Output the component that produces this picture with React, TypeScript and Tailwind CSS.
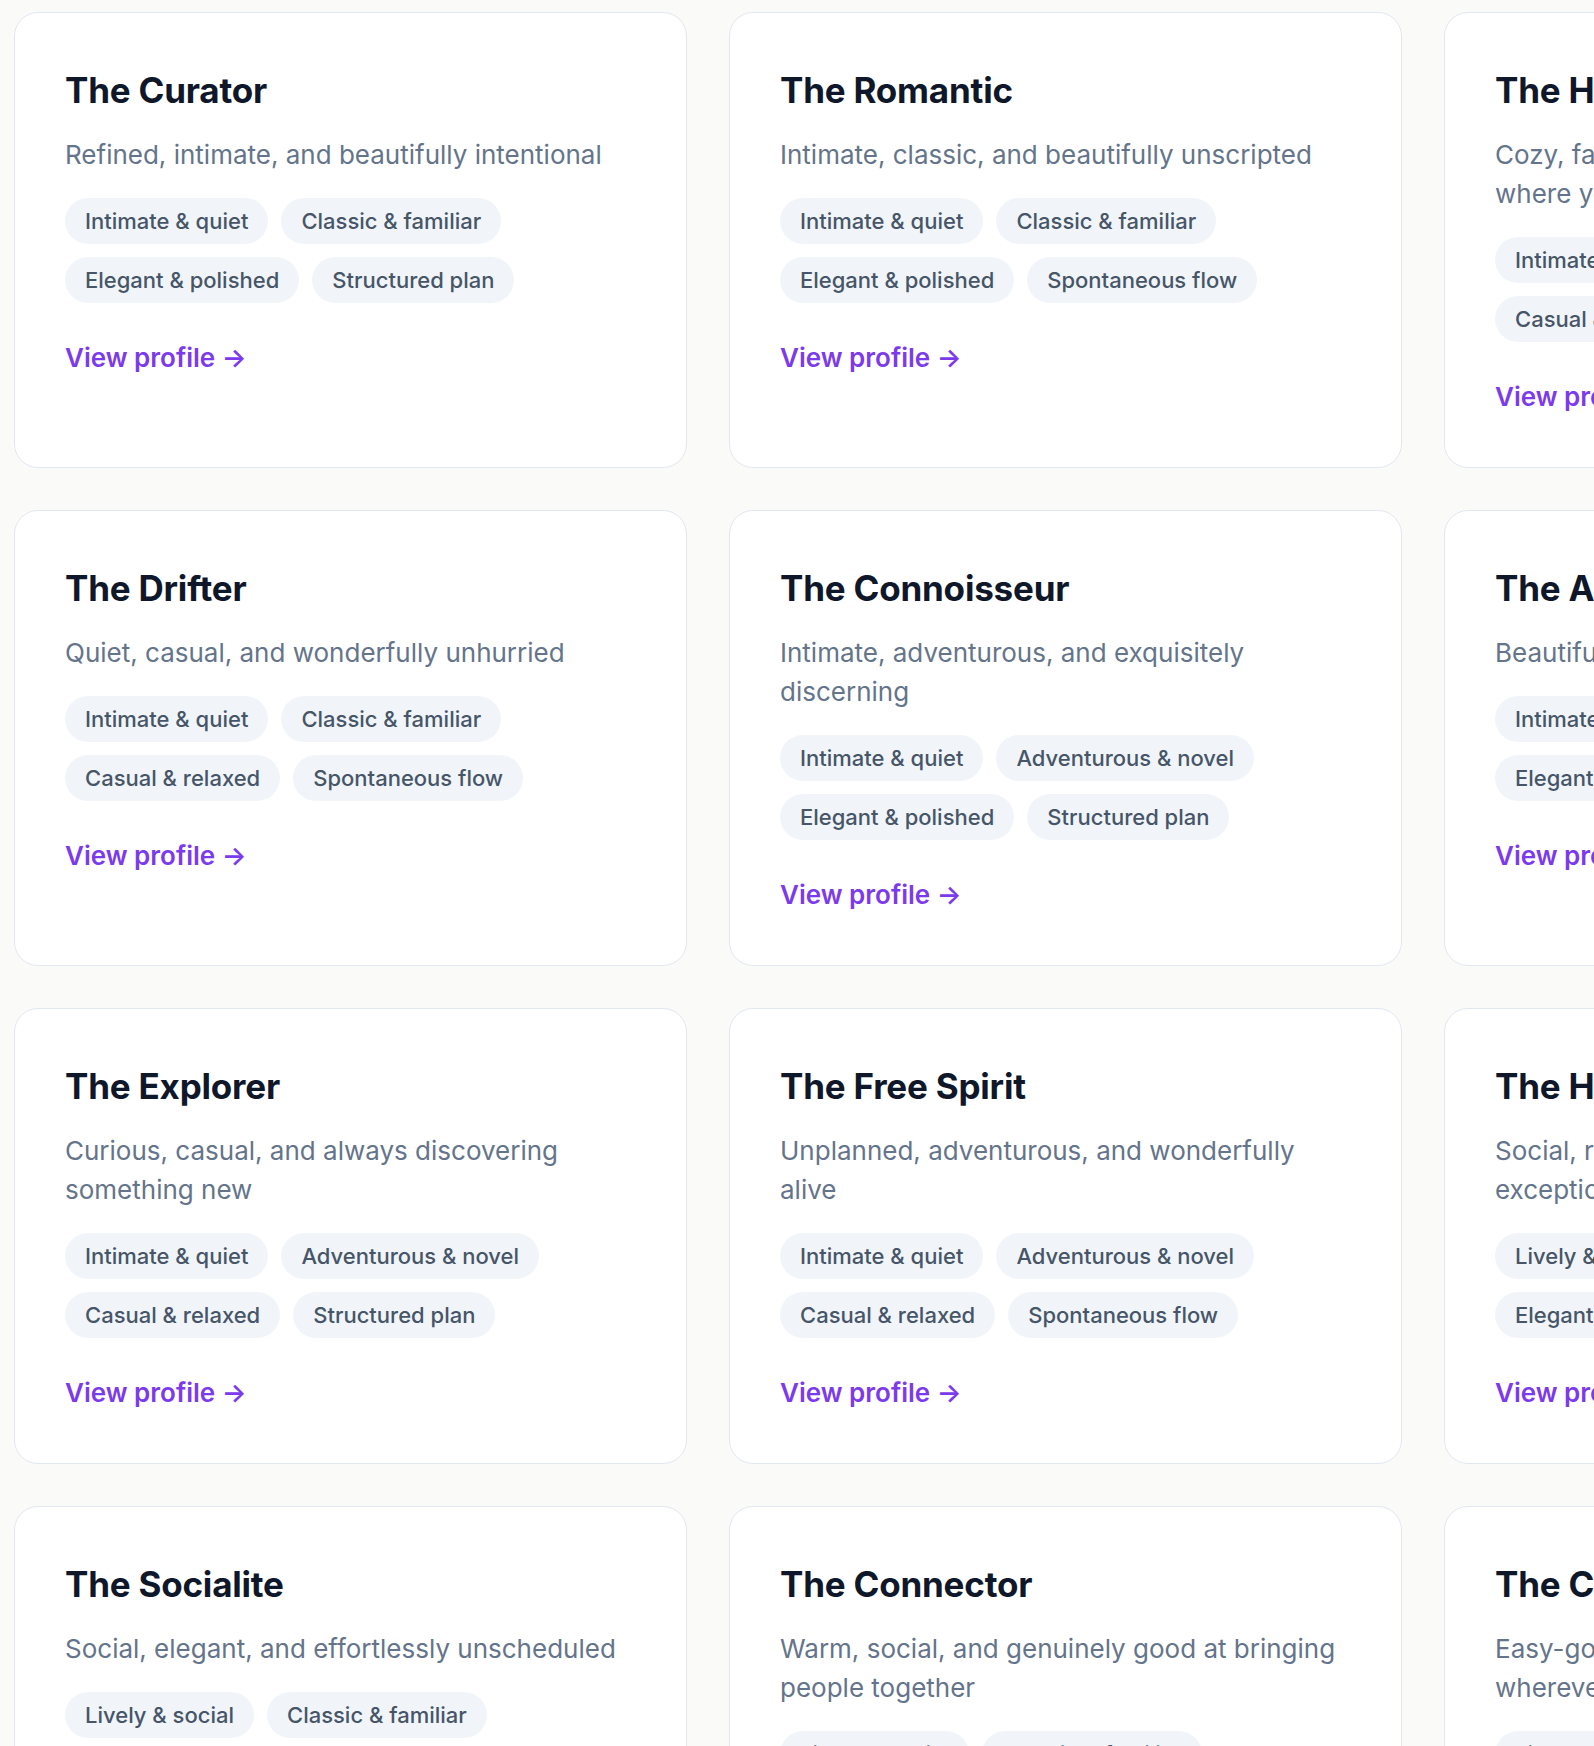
// types
interface Profile {
  name: string;
  tagline: string;
  tags: string[];
}

const profiles: Profile[] = [
  {
    name: "The Curator",
    tagline: "Refined, intimate, and beautifully intentional",
    tags: ["Intimate & quiet", "Classic & familiar", "Elegant & polished", "Structured plan"],
  },
  {
    name: "The Romantic",
    tagline: "Intimate, classic, and beautifully unscripted",
    tags: ["Intimate & quiet", "Classic & familiar", "Elegant & polished", "Spontaneous flow"],
  },
  {
    name: "The Homebody",
    tagline: "Cozy, familiar, and happiest at the local spot where you're a regular",
    tags: ["Intimate & quiet", "Classic & familiar", "Casual & relaxed", "Structured plan"],
  },
  {
    name: "The Drifter",
    tagline: "Quiet, casual, and wonderfully unhurried",
    tags: ["Intimate & quiet", "Classic & familiar", "Casual & relaxed", "Spontaneous flow"],
  },
  {
    name: "The Connoisseur",
    tagline: "Intimate, adventurous, and exquisitely discerning",
    tags: ["Intimate & quiet", "Adventurous & novel", "Elegant & polished", "Structured plan"],
  },
  {
    name: "The Aesthete",
    tagline: "Beautifully intimate, polished, and refined",
    tags: ["Intimate & quiet", "Classic & familiar", "Elegant & polished", "Spontaneous flow"],
  },
  {
    name: "The Explorer",
    tagline: "Curious, casual, and always discovering something new",
    tags: ["Intimate & quiet", "Adventurous & novel", "Casual & relaxed", "Structured plan"],
  },
  {
    name: "The Free Spirit",
    tagline: "Unplanned, adventurous, and wonderfully alive",
    tags: ["Intimate & quiet", "Adventurous & novel", "Casual & relaxed", "Spontaneous flow"],
  },
  {
    name: "The Host",
    tagline: "Social, refined, and warmly gracious with an exceptional eye for detail",
    tags: ["Lively & social", "Classic & familiar", "Elegant & polished", "Structured plan"],
  },
  {
    name: "The Socialite",
    tagline: "Social, elegant, and effortlessly unscheduled",
    tags: ["Lively & social", "Classic & familiar", "Elegant & polished", "Spontaneous flow"],
  },
  {
    name: "The Connector",
    tagline: "Warm, social, and genuinely good at bringing people together",
    tags: ["Lively & social", "Classic & familiar", "Casual & relaxed", "Structured plan"],
  },
  {
    name: "The Companion",
    tagline: "Easy-going, sociable, and always up for fun wherever the night goes",
    tags: ["Lively & social", "Adventurous & novel", "Casual & relaxed", "Spontaneous flow"],
  },
];

const ProfileCard = ({ item }: { item: Profile }) => {
  return (
    <div
      className="
      bg-white border border-[#e2e8f0]
      rounded-[24px]
      pt-[56px] px-[50px] pb-[51px]
      flex flex-col
      "
    >
      <h3 className="text-[35px] leading-[42px] font-bold text-[#0f172a] tracking-[-0.2px]">
        {item.name}
      </h3>
      <p className="mt-[24px] text-[26px] leading-[39px] text-[#64748b]">
        {item.tagline}
      </p>
      <div className="mt-[24px] flex flex-wrap gap-x-[13px] gap-y-[13px]">
        {item.tags.map((tag) => (
          <span
            key={tag}
            className="
            h-[46px] px-[20px] flex items-center
            rounded-full bg-[#f1f5f9]
            text-[22px] font-medium text-[#475569]
            "
          >
            {tag}
          </span>
        ))}
      </div>
      <a
        href="#"
        className="mt-[35px] text-[26px] leading-[39px] font-semibold text-[#7c3aed]"
      >
        View profile →
      </a>
    </div>
  );
};

const App = () => {
  return (
    <div
      className="min-h-screen w-full overflow-hidden bg-[#fafaf9] pt-[12px] pl-[14px]"
      style={{ fontFamily: "Inter, 'Noto Sans', sans-serif" }}
    >
      <div className="grid grid-cols-[673px_673px_673px] gap-x-[42px] gap-y-[42px] w-[2103px]">
        {profiles.map((p) => (
          <ProfileCard key={p.name} item={p} />
        ))}
      </div>
    </div>
  );
};

export default App;
